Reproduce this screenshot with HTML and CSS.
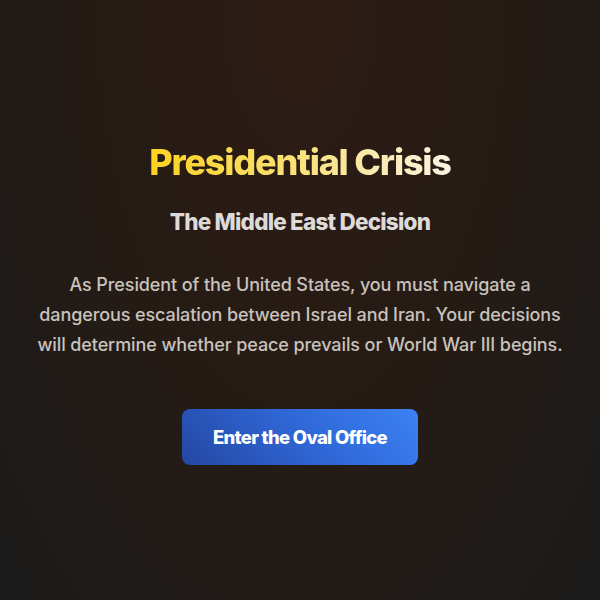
FILE: index.html
```html
<!DOCTYPE html>
<html lang="en">
<head>
    <meta charset="UTF-8">
    <meta name="viewport" content="width=device-width, initial-scale=1.0">
    <title>Presidential Crisis</title>
    <link rel="stylesheet" href="styles.css">
</head>
<body>
    <div class="screen">
        <div class="intro">
            <h1 class="title">Presidential Crisis</h1>
            <h2 class="subtitle">The Middle East Decision</h2>
            <p class="lead">As President of the United States, you must navigate a dangerous escalation between Israel and Iran. Your decisions will determine whether peace prevails or World War III begins.</p>
            <button class="start-btn">Enter the Oval Office</button>
        </div>
    </div>
</body>
</html>
```

FILE: styles.css
```css
* {
    box-sizing: border-box;
    font-family: "Inter", "Lato", sans-serif;
}

body {
    margin: 0;
    padding: 0;
    background: #1b1a1a;
}

.screen {
    min-height: 100vh;
    display: flex;
    align-items: center;
    justify-content: center;
    padding: 26px 30px 20px;
    background: radial-gradient(ellipse at 50% 0%, #2d1c14 0%, #251b15 50%, #1b1b1b 100%);
}

.intro {
    text-align: center;
    max-width: 534px;
}

.title {
    margin: 0;
    font-size: 36px;
    font-weight: 800;
    letter-spacing: -1.2px;
    line-height: 1.2;
    background: linear-gradient(90deg, #fdd21f 0%, #f9e27a 50%, #fbf3e4 100%);
    -webkit-background-clip: text;
    background-clip: text;
    color: transparent;
    display: inline-block;
}

.subtitle {
    margin: 24px 0 0;
    font-size: 22.5px;
    font-weight: 800;
    letter-spacing: -0.8px;
    color: #dedad8;
}

.lead {
    margin: 35px 0 0;
    font-size: 18px;
    font-weight: 500;
    line-height: 30px;
    letter-spacing: -0.1px;
    color: #c9c2bc;
}

.start-btn {
    margin-top: 49px;
    width: 236px;
    height: 56px;
    border: none;
    border-radius: 8px;
    background: linear-gradient(45deg, #2447a3 0%, #3068d8 55%, #3b82f4 100%);
    color: #fff;
    font-size: 18.5px;
    font-weight: 800;
    letter-spacing: -0.7px;
    cursor: pointer;
}
```
